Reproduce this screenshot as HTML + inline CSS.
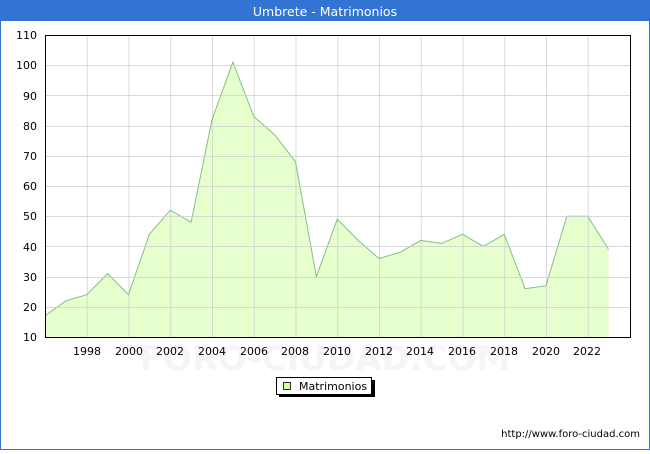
<!DOCTYPE html>
<html><head><style>
body{margin:0;width:650px;height:450px;overflow:hidden;background:#fff;font-family:"DejaVu Sans","Liberation Sans",sans-serif;}
</style></head><body>
<svg width="650" height="450" xmlns="http://www.w3.org/2000/svg" font-family="DejaVu Sans, Liberation Sans, sans-serif">
<rect x="0" y="0" width="650" height="450" fill="#fff"/>
<rect x="0" y="0" width="650" height="21" fill="#3273d4"/>
<rect x="0" y="0" width="1" height="450" fill="#3273d4"/>
<rect x="649" y="0" width="1" height="450" fill="#3273d4"/>
<rect x="0" y="449" width="650" height="1" fill="#3273d4"/>
<text x="325" y="16" text-anchor="middle" fill="#fff" font-size="12.5">Umbrete - Matrimonios</text>
<text x="325" y="370" text-anchor="middle" fill="#f5f5f5" font-size="34" font-weight="bold">FORO-CIUDAD.COM</text>
<g transform="translate(45,0) scale(0.994,1) translate(-45,0)">
<polygon fill="#e6ffcc" points="45,337 45,315.9 66,300.8 87,294.7 108,273.6 129,294.7 150,234.3 171,210.2 192,222.2 213,119.6 234,62.2 255,116.5 276,134.7 297,161.8 318,276.6 339,219.2 360,240.4 381,258.5 402,252.4 423,240.4 444,243.4 465,234.3 486,246.4 507,234.3 528,288.7 549,285.7 570,216.2 591,216.2 612,249.4 612,337"/>
<g stroke="#d0d0d0" stroke-width="1" opacity="0.8">
<line x1="87.5" x2="87.5" y1="35" y2="337"/><line x1="129.5" x2="129.5" y1="35" y2="337"/><line x1="171.5" x2="171.5" y1="35" y2="337"/><line x1="213.5" x2="213.5" y1="35" y2="337"/><line x1="255.5" x2="255.5" y1="35" y2="337"/><line x1="297.5" x2="297.5" y1="35" y2="337"/><line x1="339.5" x2="339.5" y1="35" y2="337"/><line x1="381.5" x2="381.5" y1="35" y2="337"/><line x1="423.5" x2="423.5" y1="35" y2="337"/><line x1="465.5" x2="465.5" y1="35" y2="337"/><line x1="507.5" x2="507.5" y1="35" y2="337"/><line x1="549.5" x2="549.5" y1="35" y2="337"/><line x1="591.5" x2="591.5" y1="35" y2="337"/>
</g>
<polyline fill="none" stroke="#80c080" stroke-width="1" points="45,315.9 66,300.8 87,294.7 108,273.6 129,294.7 150,234.3 171,210.2 192,222.2 213,119.6 234,62.2 255,116.5 276,134.7 297,161.8 318,276.6 339,219.2 360,240.4 381,258.5 402,252.4 423,240.4 444,243.4 465,234.3 486,246.4 507,234.3 528,288.7 549,285.7 570,216.2 591,216.2 612,249.4"/>
</g>
<g stroke="#d0d0d0" stroke-width="1" opacity="0.8">
<line x1="45" x2="630" y1="65.5" y2="65.5"/><line x1="45" x2="630" y1="95.5" y2="95.5"/><line x1="45" x2="630" y1="126.5" y2="126.5"/><line x1="45" x2="630" y1="156.5" y2="156.5"/><line x1="45" x2="630" y1="186.5" y2="186.5"/><line x1="45" x2="630" y1="216.5" y2="216.5"/><line x1="45" x2="630" y1="246.5" y2="246.5"/><line x1="45" x2="630" y1="277.5" y2="277.5"/><line x1="45" x2="630" y1="307.5" y2="307.5"/>
</g>
<rect x="45.5" y="35.5" width="585" height="302" fill="none" stroke="#000" stroke-width="1"/>
<g font-size="11" fill="#000" text-anchor="end">
<text x="37" y="39">110</text><text x="37" y="69">100</text><text x="37" y="100">90</text><text x="37" y="130">80</text><text x="37" y="160">70</text><text x="37" y="190">60</text><text x="37" y="220">50</text><text x="37" y="251">40</text><text x="37" y="281">30</text><text x="37" y="311">20</text><text x="37" y="341">10</text>
</g>
<g font-size="11" fill="#000" text-anchor="middle">
<text x="87" y="355">1998</text><text x="129" y="355">2000</text><text x="170" y="355">2002</text><text x="212" y="355">2004</text><text x="254" y="355">2006</text><text x="295" y="355">2008</text><text x="337" y="355">2010</text><text x="379" y="355">2012</text><text x="420" y="355">2014</text><text x="462" y="355">2016</text><text x="504" y="355">2018</text><text x="546" y="355">2020</text><text x="587" y="355">2022</text>
</g>
<rect x="279" y="380" width="96" height="17" fill="#000"/>
<rect x="276.5" y="377.5" width="95" height="17" fill="#fff" stroke="#000"/>
<rect x="283.5" y="382.5" width="7" height="7" fill="#ccff99" stroke="#000" stroke-width="0.8"/>
<text x="299" y="390" font-size="11">Matrimonios</text>
<text x="640" y="437" font-size="10" text-anchor="end">http://www.foro-ciudad.com</text>
</svg>
</body></html>
